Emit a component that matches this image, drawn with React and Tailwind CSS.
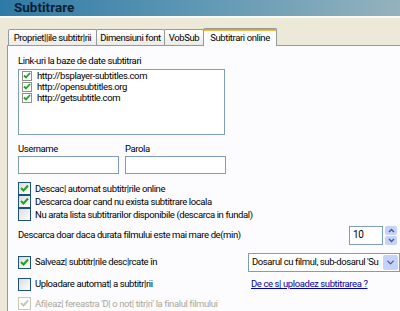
import { ChevronDown } from 'lucide-react';

const font = { fontFamily: 'Roboto, "Liberation Sans", Arial, sans-serif' };

function Check({ checked, disabled }) {
  return (
    <span
      className={`w-[13px] h-[13px] shrink-0 border flex items-center justify-center ${
        disabled ? 'border-[#c9c7ba] bg-white' : 'border-[#1c5180] bg-gradient-to-br from-[#dcdcd7] to-white'
      }`}
    >
      {checked && (
        <svg width="9" height="9" viewBox="0 0 9 9">
          <path
            d="M1 4 L3.5 6.5 L8 1.5"
            fill="none"
            stroke={disabled ? '#c9c7ba' : '#21a121'}
            strokeWidth="2"
          />
        </svg>
      )}
    </span>
  );
}

function CheckRow({ checked, disabled, children, className = '' }) {
  return (
    <div className={`flex items-center gap-[4px] ${className}`}>
      <Check checked={checked} disabled={disabled} />
      <span className={disabled ? 'text-[#aca899]' : 'text-black'}>{children}</span>
    </div>
  );
}

function ListItem({ children }) {
  return (
    <div className="flex items-center gap-[5px] h-[11px]">
      <span className="w-[10px] h-[10px] border border-[#8f8f8f] bg-white flex items-center justify-center">
        <svg width="8" height="8" viewBox="0 0 8 8">
          <path d="M1 3.5 L3 5.5 L7 1" fill="none" stroke="#21a121" strokeWidth="1.8" />
        </svg>
      </span>
      <span>{children}</span>
    </div>
  );
}

const tabs = [
  { label: 'Propriet||ile subtitr|rii', w: 'w-[89px]' },
  { label: 'Dimensiuni font', w: 'w-[69px]' },
  { label: 'VobSub', w: 'w-[40px]' },
];

export default function App() {
  return (
    <div
      className="w-[400px] h-[311px] bg-[#ece9d8] overflow-hidden text-[9.5px] leading-none tracking-[-0.4px] whitespace-nowrap"
      style={font}
    >
      {/* Title */}
      <div className="h-[16px] bg-gradient-to-r from-[#2e7aa6] via-[#5f98b4] to-[#94b2bd] flex items-center pl-[14px]">
        <span className="text-[13.5px] font-bold text-[#0a1f36] tracking-normal">Subtitrare</span>
      </div>
      <div className="h-[2px] bg-[#faf9f3]" />

      <div className="pl-[7px] pt-[9px]">
        {/* Tabs */}
        <div className="flex items-end h-[18px]">
          <div className="w-[1px]" />
          {tabs.map((t) => (
            <div
              key={t.label}
              className={`${t.w} h-[16px] border border-b-0 border-[#919b9c] bg-gradient-to-b from-white to-[#ecebe6] flex items-center justify-center text-black -mr-[1px] rounded-t-[2px]`}
            >
              {t.label}
            </div>
          ))}
          <div className="w-[74px] h-[18px] border border-b-0 border-[#919b9c] bg-[#fcfcfe] flex flex-col relative z-10 -mb-[1px] rounded-t-[2px]">
            <div className="h-[2px] bg-gradient-to-b from-[#e68b2c] to-[#ffc73c]" />
            <div className="flex-1 flex items-center justify-center text-black pb-[1px]">Subtitrari online</div>
          </div>
        </div>

        {/* Panel */}
        <div className="bg-[#fcfcfe] border-l border-t border-[#919b9c] h-[270px] pl-[10px] pt-[10px] text-black">
          <div>Link-uri la baze de date subtitrari</div>
          <div className="mt-[3px] w-[207px] h-[66px] border border-[#7f9db9] bg-white pl-[3px] pt-[1px] flex flex-col">
            <ListItem>http://bsplayer-subtitles.com</ListItem>
            <ListItem>http://opensubtitles.org</ListItem>
            <ListItem>http://getsubtitle.com</ListItem>
          </div>

          <div className="mt-[9px] flex gap-[6px]">
            <div className="flex flex-col gap-[3px]">
              <span>Username</span>
              <div className="w-[101px] h-[18px] border border-[#7f9db9] bg-white" />
            </div>
            <div className="flex flex-col gap-[3px]">
              <span>Parola</span>
              <div className="w-[101px] h-[18px] border border-[#7f9db9] bg-white" />
            </div>
          </div>

          <div className="mt-[8px] flex flex-col">
            <CheckRow checked className="h-[13px]">Descac| automat subtitr|rile online</CheckRow>
            <CheckRow checked className="h-[13px]">Descarca doar cand nu exista subtitrare locala</CheckRow>
            <CheckRow className="h-[13px]">Nu arata lista subtitrarilor disponibile (descarca in fundal)</CheckRow>
          </div>

          <div className="mt-[4px] flex items-center h-[20px]">
            <span className="flex-1">Descarca doar daca durata filmului este mai mare de(min)</span>
            <div className="w-[34px] h-[19px] border border-[#7f9db9] bg-white flex items-center pl-[3px] text-[10px]">10</div>
            <div className="ml-[2px] w-[12px] h-[19px] flex flex-col gap-[1px] mr-[3px]">
              <div className="flex-1 bg-[#c3d3fd] rounded-[2px] flex items-center justify-center">
                <svg width="7" height="5" viewBox="0 0 7 5"><path d="M1 4 L3.5 1.5 L6 4" fill="none" stroke="#4d6185" strokeWidth="1.5" /></svg>
              </div>
              <div className="flex-1 bg-[#c3d3fd] rounded-[2px] flex items-center justify-center">
                <svg width="7" height="5" viewBox="0 0 7 5"><path d="M1 1 L3.5 3.5 L6 1" fill="none" stroke="#4d6185" strokeWidth="1.5" /></svg>
              </div>
            </div>
          </div>

          <div className="mt-[7px] flex items-center h-[20px]">
            <CheckRow checked className="flex-1">Salveaz| subtitr|rile desc|rcate în</CheckRow>
            <div className="w-[152px] h-[19px] border border-[#7f9db9] bg-white flex items-center pl-[3px] pr-[1px]">
              <span className="flex-1 overflow-hidden">Dosarul cu filmul, sub-dosarul 'Su</span>
              <span className="w-[15px] h-[15px] bg-[#c3d3fd] rounded-[2px] flex items-center justify-center">
                <ChevronDown size={11} strokeWidth={3} color="#4d6185" />
              </span>
            </div>
          </div>

          <div className="mt-[4px] flex items-center h-[16px]">
            <CheckRow className="flex-1">Uploadare automat| a subtitr|rii</CheckRow>
            <span className="w-[149px] shrink-0 text-[#0000aa] underline">De ce s| uploadez subtitrarea ?</span>
          </div>

          <CheckRow checked disabled className="mt-[5px]">Afi|eaz| fereastra 'D| o not| titr|ri' la finalul filmului</CheckRow>
        </div>
      </div>
    </div>
  );
}
